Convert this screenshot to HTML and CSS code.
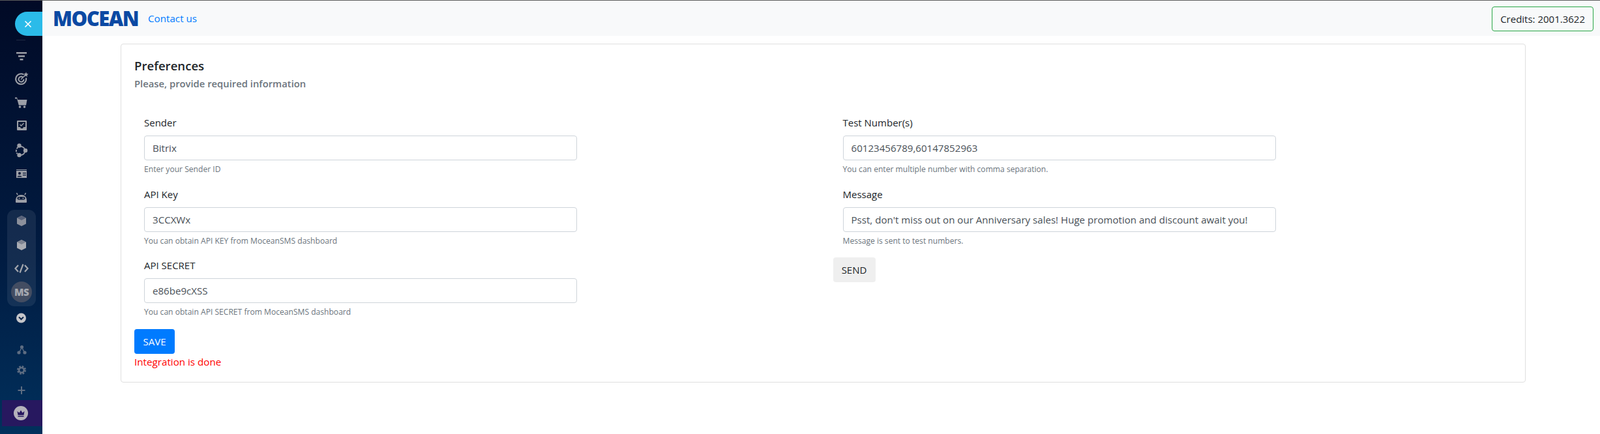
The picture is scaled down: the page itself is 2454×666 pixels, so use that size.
FILE: index.html
```html
<!DOCTYPE html>
<html lang="en">
<head>
    <meta charset="UTF-8">
    <title>Mocean Preferences</title>
    <link rel="stylesheet" href="styles.css">
</head>
<body>
    <div class="topline"></div>
    <div class="app">
        <aside class="sidebar">
            <div class="toggle">
                <svg width="14" height="14" viewBox="0 0 14 14"><path d="M2.5 2.5l9 9M11.5 2.5l-9 9" stroke="#fff" stroke-width="1.6" fill="none"/></svg>
            </div>
            <div class="side-divider"></div>

            <div class="nav-item">
                <svg viewBox="0 0 36 36"><path d="M10 12h16v2.500H10zM13 17h10v2.500H13zM15.500 22h5v2.500h-5z" fill="#9c9fa7"/></svg>
            </div>
            <div class="nav-item">
                <svg viewBox="0 0 36 36"><g fill="none" stroke="#9c9fa7"><path d="M21.500 10.500a8 8 0 1 0 3.500 5" stroke-width="2"/><path d="M20 14.500a4 4 0 1 0 1.500 3" stroke-width="2"/><path d="M17 18l7-7" stroke-width="1.600"/></g><path d="M25 6.500l1 2.500 2.500.5-2 1.800.5 2.500-2.500-1.300-2 1 .5-2.700-1.500-1.500 2.500-.5z" fill="#9c9fa7"/></svg>
            </div>
            <div class="nav-item">
                <svg viewBox="0 0 36 36"><path d="M8 9.500h3l1.200 3.500H26.500L25 21.500H13.800l-2.800-10H8z" fill="#9c9fa7"/><circle cx="15.500" cy="24" r="1.800" fill="#9c9fa7"/><circle cx="22.500" cy="24" r="1.800" fill="#9c9fa7"/></svg>
            </div>
            <div class="nav-item">
                <svg viewBox="0 0 36 36"><rect x="11" y="9" width="15" height="15" rx="1" fill="#9c9fa7"/><path d="M13 11h11v8h-3l-1 2h-3l-1-2h-3z" fill="#0a1836"/><path d="M15.500 15l2 2 4-4" stroke="#9c9fa7" stroke-width="1.300" fill="none"/></svg>
            </div>
            <div class="nav-item">
                <svg viewBox="0 0 36 36"><g fill="none" stroke="#9c9fa7" stroke-width="1.800"><path d="M15 13a7 7 0 0 1 8 4M23 21a7 7 0 0 1-7 5"/><path d="M12.500 14a7 7 0 0 0-1 10" stroke-dasharray="3 1.500"/></g><circle cx="14.500" cy="11.500" r="3.200" fill="#9c9fa7"/><circle cx="24" cy="19" r="3.200" fill="#9c9fa7"/><circle cx="14.500" cy="26" r="3.200" fill="#9c9fa7"/></svg>
            </div>
            <div class="nav-item">
                <svg viewBox="0 0 36 36"><path d="M10 12h16v1H10z" fill="#9c9fa7"/><rect x="10" y="14" width="16" height="11" fill="#9c9fa7"/><circle cx="15" cy="18" r="2" fill="#0a1836"/><path d="M11.500 23.500c0-2.500 7-2.500 7 0z" fill="#0a1836"/><path d="M20 17h5v1.200h-5zM20 20h5v1.200h-5z" fill="#0a1836"/></svg>
            </div>
            <div class="nav-item">
                <svg viewBox="0 0 36 36"><path d="M9 26v-2c0-6 3.500-9 8.500-9s8.500 3 8.500 9v2c0 .5-.5 1-1 1H10c-.5 0-1-.5-1-1z" fill="#9c9fa7"/><path d="M12 15l-1.500-3M23 15l1.500-3" stroke="#9c9fa7" stroke-width="1.500"/><rect x="11.500" y="18" width="12" height="4.500" rx="2.200" fill="#0a1b3c"/><circle cx="14.500" cy="20.200" r="1" fill="#9c9fa7"/><circle cx="20.500" cy="20.200" r="1" fill="#9c9fa7"/></svg>
            </div>

            <div class="nav-group">
                <div class="nav-item">
                    <svg viewBox="0 0 36 36"><path d="M18 9l7 3.500v9L18 25l-7-3.500v-9z" fill="#8c909b"/><path d="M18 9l7 3.500-7 3.500-7-3.500z" fill="#59637a"/></svg>
                </div>
                <div class="nav-item">
                    <svg viewBox="0 0 36 36"><path d="M18 10l7 3.500v9L18 26l-7-3.500v-9z" fill="#a9acb3"/><path d="M18 10l7 3.500-7 3.500-7-3.500z" fill="#7d8391"/></svg>
                </div>
                <div class="nav-item">
                    <svg viewBox="0 0 36 36"><path d="M13 13l-4.500 5 4.500 5M23 13l4.500 5-4.500 5" stroke="#a4a7ae" stroke-width="2.200" fill="none"/><path d="M20.500 11.500l-5 13" stroke="#a4a7ae" stroke-width="2.200"/></svg>
                </div>
                <div class="nav-item">
                    <div class="avatar">MS</div>
                </div>
            </div>

            <div class="nav-item">
                <svg viewBox="0 0 36 36"><circle cx="17.500" cy="18" r="7.500" fill="#c4c5c9"/><path d="M14 16.500l3.500 3.500 3.500-3.500" stroke="#0a2347" stroke-width="2" fill="none"/></svg>
            </div>

            <div class="nav-bottom">
                <div class="nav-item short">
                    <svg viewBox="0 0 36 36"><g stroke="#5e6d82" stroke-width="1.500" fill="none"><path d="M18.500 14l-4 8M18.500 14l4 8"/></g><circle cx="18.500" cy="13.500" r="2.600" fill="#5e6d82"/><circle cx="14" cy="22" r="2.600" fill="#5e6d82"/><circle cx="23" cy="22" r="2.600" fill="#5e6d82"/></svg>
                </div>
                <div class="nav-item short">
                    <svg viewBox="0 0 36 36"><circle cx="18" cy="18" r="3.800" fill="none" stroke="#5e6d82" stroke-width="2.600"/><circle cx="18" cy="18" r="5.600" fill="none" stroke="#5e6d82" stroke-width="2.800" stroke-dasharray="2.600 1.800"/></svg>
                </div>
                <div class="nav-item short">
                    <svg viewBox="0 0 36 36"><path d="M18 12v12M12.500 18h11" stroke="#5e6d82" stroke-width="2" fill="none"/></svg>
                </div>
            </div>

            <div class="upgrade">
                <svg width="22" height="22" viewBox="0 0 22 22"><circle cx="11" cy="11" r="11" fill="#b5b3bb"/><path d="M5.500 8l3 2.500L11 6.500l2.500 4 3-2.500-1 6h-9z" fill="#27185f"/><path d="M6.500 15h9v1.500h-9z" fill="#27185f"/></svg>
            </div>
        </aside>

        <div class="main">
            <header class="topbar">
                <div class="topbar-left">
                    <span class="logo">MOCEAN</span>
                    <a class="contact" href="#">Contact us</a>
                </div>
                <div class="credits">Credits: 2001.3622</div>
            </header>

            <section class="card">
                <h1 class="card-title">Preferences</h1>
                <h2 class="card-sub">Please, provide required information</h2>

                <div class="row">
                    <div class="col">
                        <div class="form-group">
                            <label>Sender</label>
                            <input type="text" value="Bitrix">
                            <small>Enter your Sender ID</small>
                        </div>
                        <div class="form-group">
                            <label>API Key</label>
                            <input type="text" value="3CCXWx">
                            <small>You can obtain API KEY from MoceanSMS dashboard</small>
                        </div>
                        <div class="form-group">
                            <label>API SECRET</label>
                            <input type="text" value="e86be9cXSS">
                            <small>You can obtain API SECRET from MoceanSMS dashboard</small>
                        </div>
                        <button class="btn btn-save">SAVE</button>
                        <div class="done">Integration is done</div>
                    </div>
                    <div class="col">
                        <div class="form-group">
                            <label>Test Number(s)</label>
                            <input type="text" value="60123456789,60147852963">
                            <small>You can enter multiple number with comma separation.</small>
                        </div>
                        <div class="form-group">
                            <label>Message</label>
                            <input type="text" value="Psst, don't miss out on our Anniversary sales! Huge promotion and discount await you!">
                            <small>Message is sent to test numbers.</small>
                        </div>
                        <button class="btn btn-send">SEND</button>
                    </div>
                </div>
            </section>
        </div>
    </div>
</body>
</html>
```
FILE: styles.css
```css
* {
    box-sizing: border-box;
}
html, body {
    height: 100%;
}
body {
    margin: 0;
    font-family: "Open Sans", "Noto Sans", sans-serif;
    font-size: 15px;
    line-height: 24px;
    color: #212529;
    background: #fff;
    overflow: hidden;
}
.topline {
    height: 1px;
    background: #5c5c5c;
}
.app {
    display: flex;
    height: 665px;
}

/* sidebar */
.sidebar {
    width: 65px;
    flex-shrink: 0;
    background: linear-gradient(180deg, #010a26 0%, #011c42 60%, #01305c 100%);
}
.toggle {
    width: 42px;
    height: 37px;
    margin: 17px 0 0 23px;
    background: #2bbbe9;
    border-radius: 19px 0 0 19px;
    display: flex;
    align-items: center;
    justify-content: center;
    padding-right: 2px;
}
.side-divider {
    width: 14px;
    height: 1px;
    margin: 6px 0 6px 25px;
    background: rgba(255, 255, 255, 0.12);
}
.nav-item {
    width: 36px;
    height: 36px;
    margin-left: 15px;
}
.nav-item svg {
    display: block;
    width: 36px;
    height: 36px;
}
.nav-group {
    width: 44px;
    margin: 2px 0 0 11px;
    padding-bottom: 2px;
    background: rgba(255, 255, 255, 0.08);
    border-radius: 11px;
}
.nav-group .nav-item {
    margin-left: 4px;
}
.avatar {
    width: 32px;
    height: 32px;
    margin: 2px;
    border-radius: 50%;
    background: #434d62;
    color: #a5a8af;
    font-size: 15px;
    font-weight: 800;
    line-height: 32px;
    letter-spacing: -0.5px;
    text-align: center;
}
.nav-bottom {
    margin-top: 13px;
}
.nav-item.short {
    height: 31px;
}
.upgrade {
    width: 62px;
    height: 40px;
    margin: 2px 0 0 3px;
    background: #27185f;
    display: flex;
    align-items: center;
    padding-left: 18px;
}

/* main */
.main {
    flex: 1;
    min-width: 0;
}
.topbar {
    height: 54px;
    background: #f8f9fa;
    display: flex;
    align-items: center;
    justify-content: space-between;
    padding: 0 10px 0 16px;
}
.topbar-left {
    display: flex;
    align-items: center;
}
.logo {
    width: 129px;
    font-size: 31px;
    font-weight: 800;
    line-height: 36px;
    letter-spacing: -1.5px;
    color: #0b49a3;
}
.contact {
    margin-left: 17px;
    font-size: 15.2px;
    color: #007bff;
    text-decoration: none;
}
.credits {
    height: 38px;
    padding: 0 12px;
    border: 1px solid #28a745;
    border-radius: 4px;
    line-height: 36px;
    margin-top: 2px;
}

.card {
    margin: 12px 114px 0 120px;
    height: 520px;
    padding: 20px;
    border: 1px solid #dfdfdf;
    border-radius: 4px;
}
.card-title {
    margin: 1px 0 6px;
    font-size: 18.6px;
    font-weight: 600;
    line-height: 24px;
    color: #212529;
}
.card-sub {
    margin: 0 0 39px;
    font-size: 14.8px;
    font-weight: 600;
    line-height: 18px;
    color: #6c757d;
}
.row {
    display: flex;
    margin: 0 -15px;
}
.col {
    width: 50%;
    padding: 0 15px;
}
.form-group {
    padding-left: 15px;
    margin-bottom: 16px;
}
label {
    display: block;
    margin-bottom: 8px;
}
input {
    display: block;
    width: 664px;
    height: 38px;
    padding: 0 12px;
    border: 1px solid #ced4da;
    border-radius: 4px;
    font-family: inherit;
    font-size: 15.1px;
    color: #495057;
    background: #fff;
}
small {
    display: block;
    margin-top: 4px;
    font-size: 12.1px;
    line-height: 19.5px;
    color: #6c757d;
}
.btn {
    display: block;
    height: 38px;
    padding: 0 12px;
    border: none;
    border-radius: 4px;
    font-family: inherit;
    font-size: 15px;
    line-height: 38px;
}
.btn-save {
    width: 62px;
    background: #007bff;
    color: #fff;
}
.btn-send {
    width: 65px;
    background: #efefef;
    color: #212529;
}
.done {
    font-size: 15.2px;
    color: #ff0000;
}
```
